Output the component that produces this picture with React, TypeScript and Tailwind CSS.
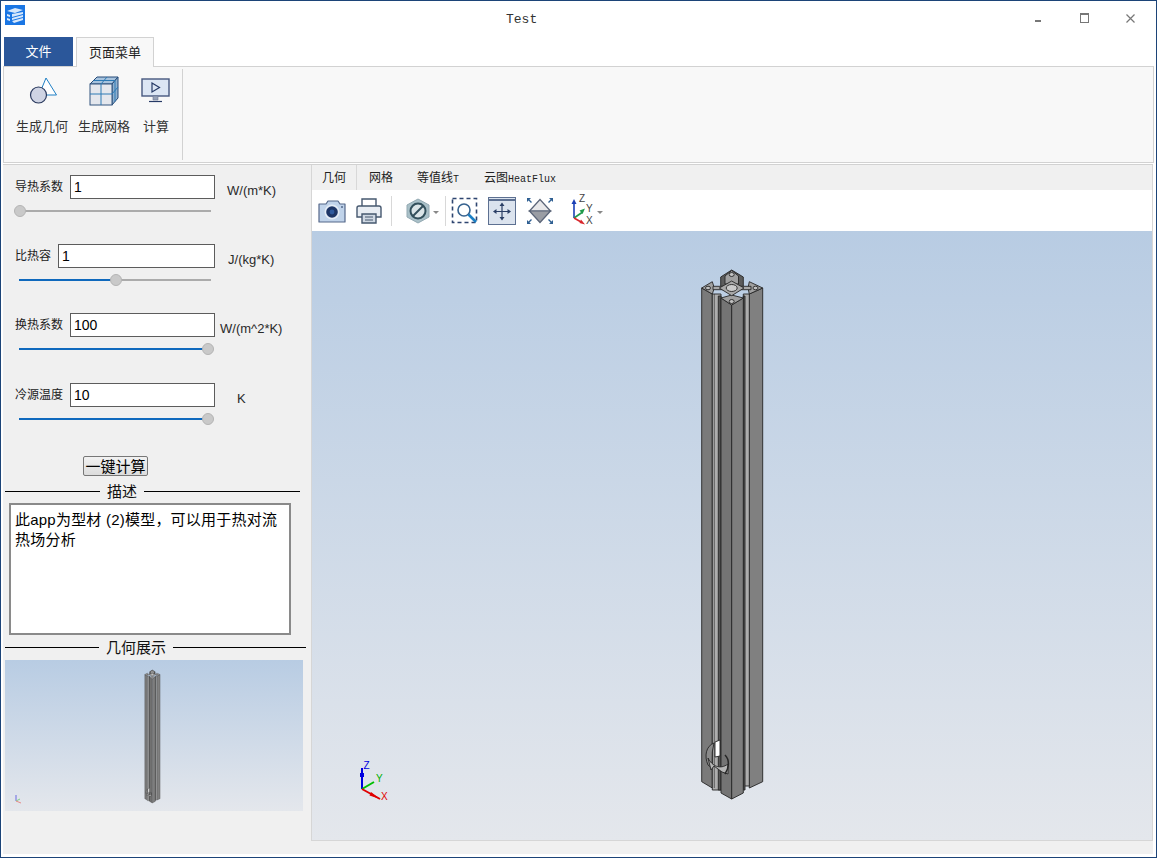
import React from 'react';

const cjk = '"Liberation Sans", "Noto Sans CJK SC", sans-serif';

// Extruded aluminium profile, drawn in the coordinates of the main viewport
const Profile = ({ className }: { className: string }) => (
  <svg viewBox="695 262 75 545" className={className}>
    <g stroke="#262626" strokeWidth="0.9" strokeLinejoin="round">
      {/* outer columns */}
      <path d="M701.7 288 L712.3 294 V788 L701.7 781.7 Z" fill="#7a7a7a" />
      <path d="M749.3 294 L762.7 288 V781.7 L749.3 788 Z" fill="#808080" />
      {/* slots */}
      <path d="M712.3 294 H721 V790 H712.3 Z" fill="#adadad" />
      <path d="M743.3 294 H749.3 V786 H743.3 Z" fill="#adadad" />
      <path d="M718.3 296 H721 V790 H718.3 Z" fill="#555" />
      <path d="M743.3 296 H745 V790 H743.3 Z" fill="#555" />
      <path d="M714.3 294 V788" fill="none" strokeWidth="0.6" />
      {/* centre column */}
      <path d="M721 298 L731.7 305 V799 L721 793 Z" fill="#747474" />
      <path d="M731.7 305 L743.3 298 V793 L731.7 799 Z" fill="#7e7e7e" />
      {/* top face */}
      <path d="M720.7 277 L731.7 270 L743.3 277 V288 H720.7 Z" fill="#5c5c5c" />
      <path d="M725 276 L731.7 270.5 L738.5 276 V284 H725 Z" fill="#a0a0a0" />
      <path d="M701.7 288 L712.3 281.7 L714.3 288 L712.3 294 Z" fill="#a0a0a0" />
      <path d="M762.7 288 L749.3 281.7 L748 288 L749.3 294 Z" fill="#a0a0a0" />
      <path d="M713 286.3 H751 V289.7 H713 Z" fill="#a8a8a8" />
      <path d="M721 298 L731.7 295 L743.3 298 L731.7 305 Z" fill="#a0a0a0" />
      <path d="M719.3 288 L731.7 281 L744 288 L731.7 295.7 Z" fill="#a8a8a8" />
      <ellipse cx="731.7" cy="288" rx="5.5" ry="3.5" fill="#cacaca" />
      <ellipse cx="731.7" cy="301.5" rx="2.5" ry="2" fill="#c0c0c0" />
      <ellipse cx="731.7" cy="274.5" rx="2.5" ry="2" fill="#c4c4c4" />
      <ellipse cx="708" cy="288" rx="2.5" ry="1.8" fill="#c0c0c0" />
      <ellipse cx="755.5" cy="288" rx="2.5" ry="1.8" fill="#c0c0c0" />
      {/* through hole near the foot */}
      <path d="M714 743 C706 746 704 756 708 765 L712 768 L712.3 752 Z" fill="#8a8a8a" />
      <path d="M708 758 C712 766 720 770 728 764 L728 774 L722 772 L714 766 L711 770 Z" fill="#b5b5b5" />
      <path d="M725 755 C730 760 729 768 725 774" fill="none" strokeWidth="1.5" />
      <path d="M715 742 L720 740 V756 L715 757 Z" fill="#fff" />
    </g>
  </svg>
);

const Slider = ({ pos, left = 19 }: { pos: number; left?: number }) => (
  <div className="relative h-[2px] w-[192px] bg-[#ababab]" style={{ marginLeft: left }}>
    <div className="h-full bg-[#0f69bd]" style={{ width: pos }} />
    <div
      className="absolute top-[-5px] h-[12px] w-[12px] rounded-full border border-[#b4b4b4] bg-[#c9c9c9]"
      style={{ left: pos - 6 }}
    />
  </div>
);

const Param = ({
  label,
  value,
  unit,
  inputW,
  unitGap,
  pos,
  className,
}: {
  label: string;
  value: string;
  unit: string;
  inputW: string;
  unitGap: string;
  pos: number;
  className: string;
}) => (
  <div className={className}>
    <div className="flex h-[24px] items-center pl-[12px]">
      <span className="whitespace-nowrap text-[12px] leading-none text-[#222]" style={{ fontFamily: cjk }}>
        {label}
      </span>
      <input
        readOnly
        value={value}
        className={`ml-[7px] ${inputW} h-[24px] border border-[#5c5c5c] bg-white pl-[3px] text-[14px] text-black outline-none`}
        style={{ fontFamily: '"Liberation Sans", sans-serif' }}
      />
      <span
        className={`${unitGap} mt-[6px] whitespace-nowrap text-[13px] leading-none text-[#2a2a2a]`}
        style={{ fontFamily: '"Liberation Sans", sans-serif' }}
      >
        {unit}
      </span>
    </div>
    <div className="mt-[11px]">
      <Slider pos={pos} left={16} />
    </div>
  </div>
);

const Legend = ({ title, left, right, textW }: { title: string; left: string; right: string; textW: string }) => (
  <div className="flex h-[16px] items-center pl-[2px]">
    <div className={`${left} h-px bg-black`} />
    <span className={`${textW} whitespace-nowrap text-center text-[15px] leading-none text-[#111]`} style={{ fontFamily: cjk }}>
      {title}
    </span>
    <div className={`${right} h-px bg-black`} />
  </div>
);

const RibbonBtn = ({ label, icon, className }: { label: string; icon: React.ReactNode; className: string }) => (
  <div className={`${className} flex flex-col items-center`}>
    <div className="mt-[7px] h-[30px] w-[30px]">{icon}</div>
    <span className="mt-[12px] whitespace-nowrap text-[13px] leading-[18px] text-[#333]" style={{ fontFamily: cjk }}>
      {label}
    </span>
  </div>
);

const Caret = () => <div className="mt-[3px] h-0 w-0 border-x-[3px] border-t-[3px] border-x-transparent border-t-[#888]" />;

export default function App() {
  return (
    <div className="box-border flex h-[858px] w-[1157px] flex-col overflow-hidden border border-[#1c4478] bg-white">
      {/* title bar */}
      <div className="relative flex h-[36px] shrink-0 items-start">
        <svg viewBox="0 0 20 20" className="ml-[4px] mt-[4px] h-[20px] w-[20px]">
          <rect width="20" height="20" fill="#1a76e4" />
          <path d="M2 6 L10 3 L18 5 L10 8 Z M2 9 V11 L5 12 V10 Z M7 9 L18 7 V9 L7 12 Z M2 13 V15 L5 16 V14 Z M7 13 L18 10 V12 L7 15 Z M7 16 L18 13 V15 L9 18 Z" fill="#d8e8fb" />
        </svg>
        <span
          className="absolute left-[505px] top-[12px] text-[13px] leading-[14px] text-[#333]"
          style={{ fontFamily: '"Liberation Mono", monospace' }}
        >
          Test
        </span>
        <div className="absolute left-[1034px] top-[19px] h-[2px] w-[6px] bg-[#777]" />
        <div className="absolute left-[1079px] top-[12px] h-[10px] w-[9px] border border-t-2 border-[#777]" />
        <svg viewBox="0 0 9 9" className="absolute left-[1125px] top-[13px] h-[9px] w-[9px]">
          <path d="M0.5 0.5 L8.5 8.5 M8.5 0.5 L0.5 8.5" stroke="#777" strokeWidth="1.2" />
        </svg>
      </div>

      {/* ribbon tabs */}
      <div className="flex h-[29px] shrink-0 items-end pl-[3px]" style={{ fontFamily: cjk }}>
        <div className="flex h-[29px] w-[69px] items-center justify-center bg-[#2b579a] text-[13px] text-white">文件</div>
        <div className="relative top-px ml-[3px] flex h-[30px] w-[78px] items-center justify-center border-x border-t border-[#d2d2d2] bg-[#f8f8f8] text-[13px] text-[#222]">
          页面菜单
        </div>
      </div>

      {/* ribbon body */}
      <div className="mx-[2px] flex h-[97px] shrink-0 border border-[#d2d2d2] bg-[#f8f8f8]">
        <div className="mt-[2px] flex h-[91px] w-[179px] border-r border-[#d2d2d2] pl-[12px]">
          <RibbonBtn
            label="生成几何"
            className="w-[52px]"
            icon={
              <svg viewBox="0 0 30 30" className="h-full w-full">
                <path d="M19 2 L29.5 19 H12 Z" fill="#fff" stroke="#1f7fc4" strokeWidth="1" />
                <circle cx="11.5" cy="19" r="8" fill="#cfd4e4" stroke="#2b3a5e" strokeWidth="1.2" />
              </svg>
            }
          />
          <RibbonBtn
            label="生成网格"
            className="ml-[10px] w-[52px]"
            icon={
              <svg viewBox="0 0 30 30" className="h-full w-full">
                <path d="M1 8 L8 1 H29 L23 8 Z" fill="#a7c3de" stroke="#244a78" />
                <path d="M23 8 L29 1 V22 L23 29 Z" fill="#8fb0cf" stroke="#244a78" />
                <rect x="1" y="8" width="22" height="21" fill="#e4e7ed" stroke="#32557f" />
                <path d="M12 8 V29 M1 18 H23 M12 8 L18 1 M4.5 4.5 H26 M26 4.5 V25.5 M23 18 L29 11" stroke="#2c7ab5" fill="none" />
              </svg>
            }
          />
          <RibbonBtn
            label="计算"
            className="ml-[12px] w-[28px]"
            icon={
              <svg viewBox="0 0 30 30" className="h-full w-full">
                <rect x="1" y="3" width="27" height="17" fill="#dce6f4" stroke="#47587f" strokeWidth="1.4" />
                <path d="M11 7 L18.5 11.5 L11 16 Z" fill="none" stroke="#263a66" strokeWidth="1.2" />
                <path d="M12 20 H17 V24 H12 Z" fill="#98a3b8" stroke="#6b7690" strokeWidth="0.6" />
                <path d="M8 25.5 H21" stroke="#263a66" strokeWidth="1.2" />
              </svg>
            }
          />
        </div>
      </div>

      {/* main area */}
      <div className="ml-[2px] mr-[3px] mt-px flex h-[690px] shrink-0 border-t border-[#d2d2d2] bg-[#f0f0f0]">
        {/* left panel */}
        <div className="flex w-[308px] shrink-0 flex-col">
          <Param label="导热系数" value="1" unit="W/(m*K)" inputW="w-[145px]" unitGap="ml-[12px]" pos={1} className="mt-[10px] h-[69px]" />
          <Param label="比热容" value="1" unit="J/(kg*K)" inputW="w-[157px]" unitGap="ml-[13px]" pos={97} className="h-[69px]" />
          <Param label="换热系数" value="100" unit="W/(m^2*K)" inputW="w-[145px]" unitGap="ml-[5px]" pos={189} className="h-[70px]" />
          <Param label="冷源温度" value="10" unit="K" inputW="w-[145px]" unitGap="ml-[22px]" pos={189} className="h-[73px]" />

          <button
            className="ml-[80px] h-[20px] w-[65px] rounded-[2px] border border-[#777] bg-gradient-to-b from-[#f2f2f2] to-[#dcdcdc] text-[15px] leading-none text-black"
            style={{ fontFamily: cjk }}
          >
            一键计算
          </button>
          <div className="mt-[7px]">
            <Legend title="描述" left="w-[95px]" right="w-[156px]" textW="w-[44px]" />
          </div>
          <div
            className="ml-[6px] mt-[4px] h-[132px] w-[282px] border-2 border-[#8a8a8a] bg-white px-[4px] py-[5px] text-[15px] leading-[20px] tracking-[0.22px] text-black"
            style={{ fontFamily: cjk }}
          >
            此app为型材 (2)模型，可以用于热对流
            <br />
            热场分析
          </div>
          <div className="mt-[4px]">
            <Legend title="几何展示" left="w-[94px]" right="w-[133px]" textW="w-[74px]" />
          </div>
          <div className="relative ml-[2px] mt-[5px] h-[151px] w-[298px] bg-gradient-to-b from-[#b8cce3] to-[#e4e7ec]">
            <Profile className="absolute left-[138px] top-[8px] h-[137px] w-[19px]" />
            <svg viewBox="0 0 8 10" className="absolute left-[9px] top-[134px] h-[10px] w-[8px]">
              <path d="M2 1 V7" stroke="#6a6ae0" fill="none" />
              <path d="M2 7 L6 5" stroke="#7fcf8a" fill="none" />
              <path d="M2 7 L7 9" stroke="#e88a8a" fill="none" />
            </svg>
          </div>
        </div>

        {/* viewer */}
        <div className="flex h-[676px] w-[843px] flex-col border-x border-b border-[#d6d6d6]">
          <div className="flex h-[25px] shrink-0 items-center text-[12px] text-[#222]" style={{ fontFamily: cjk }}>
            <div className="flex h-full w-[45px] items-center justify-center border-r border-[#d8d8d8]">几何</div>
            <span className="ml-[12px]">网格</span>
            <span className="ml-[24px]">
              等值线<span className="text-[10px]" style={{ fontFamily: '"Liberation Mono", monospace' }}>T</span>
            </span>
            <span className="ml-[25px]">
              云图<span className="text-[10px]" style={{ fontFamily: '"Liberation Mono", monospace' }}>HeatFlux</span>
            </span>
          </div>

          {/* toolbar */}
          <div className="flex h-[41px] shrink-0 items-center bg-white pl-[6px]">
            <svg viewBox="0 0 28 24" className="h-[24px] w-[28px]">
              <path d="M1 5 H8 L10 2 H20 L22 5 H27 V23 H1 Z" fill="#c0d3ea" stroke="#55688a" strokeWidth="1.2" strokeLinejoin="round" />
              <circle cx="14" cy="13" r="7.5" fill="#e4ecf6" />
              <circle cx="14" cy="13" r="5.8" fill="#1d3566" />
              <circle cx="14" cy="13" r="2.4" fill="#2f5a9e" />
              <circle cx="24" cy="8" r="1" fill="#55688a" />
            </svg>
            <svg viewBox="0 0 28 26" className="ml-[9px] h-[26px] w-[28px]">
              <path d="M7 1 H21 V9 H7 Z" fill="#fff" stroke="#46586f" strokeWidth="1.4" />
              <path d="M2 10 Q2 8 4 8 H24 Q26 8 26 10 V19 H2 Z" fill="#e8edf3" stroke="#46586f" strokeWidth="1.4" />
              <path d="M7 16 H21 V25 H7 Z" fill="#cfd8e3" stroke="#46586f" strokeWidth="1.4" />
              <path d="M10 19 H18 M10 22 H18" stroke="#46586f" />
            </svg>
            <div className="ml-[8px] h-[30px] w-px bg-[#d8d8d8]" />
            <svg viewBox="0 0 24 26" className="ml-[14px] h-[26px] w-[24px]">
              <path d="M12 1 L23 7 V19 L12 25 L1 19 V7 Z" fill="#a9c0c8" stroke="#93a9b2" />
              <circle cx="12" cy="13" r="7.5" fill="#dbe5e8" stroke="#33505c" strokeWidth="2" />
              <path d="M7 18 L17 8" stroke="#33505c" strokeWidth="2" />
            </svg>
            <div className="ml-[3px]"><Caret /></div>
            <div className="ml-[6px] h-[30px] w-px bg-[#d8d8d8]" />
            <svg viewBox="0 0 28 28" className="ml-[5px] h-[28px] w-[28px]">
              <rect x="1.5" y="1.5" width="24" height="24" fill="none" stroke="#2e4570" strokeWidth="1.6" strokeDasharray="4 3" />
              <circle cx="13" cy="13" r="6" fill="#fff" stroke="#36628f" strokeWidth="1.6" />
              <path d="M17.5 17.5 L25 25" stroke="#1a7fc4" strokeWidth="2.6" />
            </svg>
            <svg viewBox="0 0 28 28" className="ml-[9px] h-[28px] w-[28px]">
              <rect x="0.5" y="0.5" width="27" height="27" fill="#dbe3ee" stroke="#5d7091" />
              <path d="M0.5 3 H27.5" stroke="#5d7091" strokeWidth="2" />
              <path d="M14 7 V22 M6.5 14.5 H21.5" stroke="#2b3f66" strokeWidth="1.2" />
              <path d="M14 5.5 L11.5 9 H16.5 Z M14 23.5 L11.5 20 H16.5 Z M5 14.5 L8.5 12 V17 Z M23 14.5 L19.5 12 V17 Z" fill="#2b3f66" />
            </svg>
            <svg viewBox="0 0 28 28" className="ml-[10px] h-[28px] w-[28px]">
              <path d="M14 2.5 L24.5 14 H3.5 Z" fill="#e8e8ea" stroke="#5a6478" strokeWidth="1.2" />
              <path d="M14 25.5 L24.5 14 H3.5 Z" fill="#9a9da4" stroke="#5a6478" strokeWidth="1.2" />
              <path d="M1 5 V1 H5 Z M27 5 V1 H23 Z M1 23 V27 H5 Z M27 23 V27 H23 Z" fill="#2f5f92" />
              <path d="M2 2 L5.5 5.5 M26 2 L22.5 5.5 M2 26 L5.5 22.5 M26 26 L22.5 22.5" stroke="#2f5f92" strokeWidth="1.4" />
            </svg>
            <svg viewBox="0 0 28 28" className="ml-[15px] h-[28px] w-[28px] overflow-visible">
              <path d="M5 21 V6" stroke="#1b3fb5" strokeWidth="1.6" />
              <path d="M5 2 L2.5 7 H7.5 Z" fill="#1b3fb5" />
              <path d="M5 21 L13 15.5" stroke="#1f9a4b" strokeWidth="1.6" />
              <path d="M16 11.5 L10.5 13.5 L13.5 17 Z" fill="#1f9a4b" />
              <path d="M5 21 L13 25.5" stroke="#d8252b" strokeWidth="1.6" />
              <path d="M16 27.5 L12 22.5 L10.5 26 Z" fill="#d8252b" />
              <text x="10" y="5" fontSize="10" fill="#444" fontFamily="Liberation Sans">Z</text>
              <text x="17" y="15" fontSize="10" fill="#444" fontFamily="Liberation Sans">Y</text>
              <text x="17" y="27" fontSize="10" fill="#444" fontFamily="Liberation Sans">X</text>
            </svg>
            <Caret />
          </div>

          {/* 3D canvas */}
          <div className="relative flex-1 bg-gradient-to-b from-[#b8cce3] to-[#e4e7ec]">
            <Profile className="absolute left-[383px] top-[31px] h-[545px] w-[75px]" />
            <svg viewBox="0 0 32 46" className="absolute left-[47px] top-[525px] h-[46px] w-[32px] overflow-visible">
              <path d="M3 33 V12" stroke="#0000e0" strokeWidth="2" />
              <path d="M1 17 H5 V21 H1 Z" fill="#0000e0" />
              <path d="M3 33 L15 26" stroke="#00c000" strokeWidth="2" />
              <path d="M3 33 L21 43" stroke="#e00000" strokeWidth="2" />
              <path d="M21 43 L12 36 L10.5 39.5 Z" fill="#e00000" />
              <text x="4.5" y="12.5" fontSize="10" fill="#0000e0" fontFamily="Liberation Sans">Z</text>
              <text x="17" y="25.5" fontSize="10" fill="#00b000" fontFamily="Liberation Sans">Y</text>
              <text x="22" y="43.5" fontSize="10" fill="#e00000" fontFamily="Liberation Sans">X</text>
            </svg>
          </div>
        </div>
      </div>
    </div>
  );
}
